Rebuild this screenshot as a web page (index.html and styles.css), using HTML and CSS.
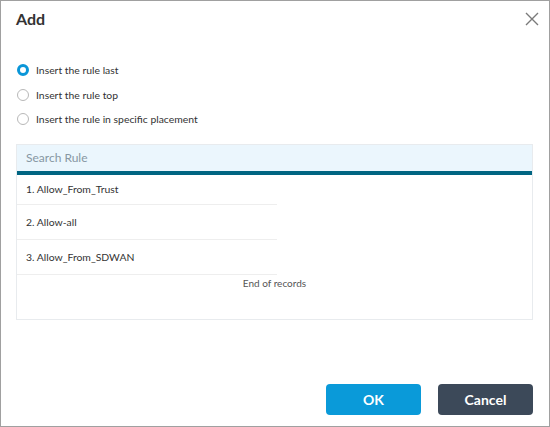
FILE: index.html
```html
<!DOCTYPE html>
<html>
<head>
<meta charset="utf-8">
<link rel="stylesheet" href="styles.css">
</head>
<body>
<div class="dialog">
  <div class="header">
    <h1 class="title">Add</h1>
    <button class="close" aria-label="Close">
      <svg width="14" height="14" viewBox="0 0 14 14"><path d="M1 1L13 13M13 1L1 13" stroke="#7a7a7a" stroke-width="1.4" fill="none"/></svg>
    </button>
  </div>
  <div class="body">
    <div class="options">
      <label class="option"><span class="radio checked"></span><span>Insert the rule last</span></label>
      <label class="option"><span class="radio"></span><span>Insert the rule top</span></label>
      <label class="option"><span class="radio"></span><span>Insert the rule in specific placement</span></label>
    </div>
    <div class="table">
      <div class="search">Search Rule</div>
      <div class="bar"></div>
      <div class="rows">
        <div class="row first">1. Allow_From_Trust</div>
        <div class="row">2. Allow-all</div>
        <div class="row">3. Allow_From_SDWAN</div>
      </div>
      <div class="end">End of records</div>
    </div>
  </div>
  <div class="footer">
    <button class="btn ok">OK</button>
    <button class="btn cancel">Cancel</button>
  </div>
</div>
</body>
</html>
```

FILE: styles.css
```css
html, body {
  margin: 0;
  padding: 0;
  background: #fff;
}
body {
  font-family: Lato, "Liberation Sans", sans-serif;
  color: #333;
}
.dialog {
  box-sizing: border-box;
  width: 550px;
  height: 427px;
  border: 1px solid #a0a0a0;
  display: flex;
  flex-direction: column;
}
.header {
  display: flex;
  align-items: center;
  justify-content: space-between;
  height: 35px;
  padding: 0 9px 0 15px;
}
.title {
  margin: 0;
  font-size: 16px;
  font-weight: 700;
  color: #333;
}
.close {
  border: 0;
  background: none;
  padding: 0;
  width: 16px;
  height: 16px;
  display: flex;
  align-items: center;
  justify-content: center;
}
.body {
  flex: 1;
  padding: 0 16px 0 15px;
}
.options {
  display: flex;
  flex-direction: column;
  gap: 12px;
  padding-top: 28px;
  padding-left: 1px;
}
.option {
  display: flex;
  align-items: center;
  gap: 7px;
  font-size: 10.4px;
  color: #333;
  height: 12.5px;
}
.radio {
  box-sizing: border-box;
  width: 12px;
  height: 12px;
  border-radius: 50%;
  border: 1px solid #b8b8b8;
  background: #fff;
  flex: none;
}
.radio.checked {
  border: 3.5px solid #0a96d8;
}
.table {
  margin-top: 18px;
  border: 1px solid #e8ebee;
  height: 176px;
  box-sizing: border-box;
}
.search {
  height: 26px;
  background: #ebf6fd;
  padding-left: 9px;
  display: flex;
  align-items: center;
  font-size: 12px;
  color: #8797a3;
}
.bar {
  height: 4px;
  background: #006582;
}
.rows {
  width: 260px;
}
.row {
  height: 34px;
  border-bottom: 1px solid #eeeeee;
  display: flex;
  align-items: center;
  padding-left: 9px;
  font-size: 10.4px;
  color: #333;
}
.row.first {
  height: 29px;
}
.end {
  text-align: center;
  font-size: 10px;
  color: #555;
  padding-top: 2px;
}
.footer {
  display: flex;
  justify-content: flex-end;
  gap: 17px;
  padding: 0 16px 11px 0;
}
.btn {
  width: 95px;
  height: 31px;
  border: 0;
  border-radius: 4px;
  color: #fff;
  font-family: Lato, "Liberation Sans", sans-serif;
  font-size: 14px;
  font-weight: 700;
}
.ok {
  background: #0a9ad9;
}
.cancel {
  background: #3c4959;
}
```
